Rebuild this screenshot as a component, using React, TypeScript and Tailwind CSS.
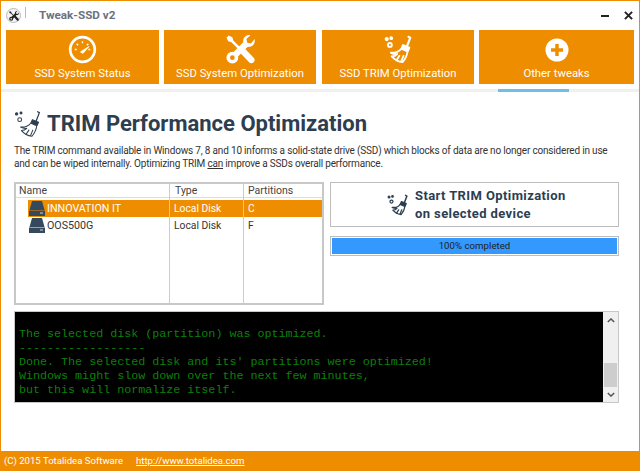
const Broom = ({ className = "", color = "#fff", w = 1.8 }: { className?: string; color?: string; w?: number }) => (
  <svg viewBox="0 0 32 32" className={className} fill="none" stroke={color} strokeWidth={w} strokeLinejoin="round" strokeLinecap="round">
    <path d="M27 2l2 1-4 10.500" strokeWidth={w * 1.2} />
    <path d="M21 11l7 3-1.500 3.500-7-3z" fill={color} />
    <path d="M19 15l7 3c-.5 4.500-2.500 8.500-5.500 12-3.500-.5-9-3-12-6.500 2.500 0 4.500-.8 6-2.500-2 .2-4.500 0-7-1.500 5 .5 10-1.500 11.500-4.500z" />
    <path d="M14 27.500l3-4.500M19 29l2.500-6" />
    <circle cx="6.500" cy="11" r="2.200" />
    <circle cx="3" cy="4.500" r="1.300" fill={color} />
    <circle cx="8" cy="3.500" r="1.100" fill={color} />
  </svg>
);

const Tools = ({ className = "", color = "#fff", hole = "#ee8d00" }: { className?: string; color?: string; hole?: string }) => (
  <svg viewBox="0 0 32 32" className={className} fill={color}>
    <path d="M0.500 3L3 .500 7 2.500 8 6 19.500 17.500 17.500 19.500 6 8 2.500 7z" />
    <path d="M19 16l1.500-1.500 10 10.500c1.500 1.500 1.500 3.500 0 5s-3.500 1.500-5 0L15.500 19.500z" />
    <path d="M31.500 4.500c1 4-1.500 8.500-6 8.500-1 0-1.700.2-2.400.9L12.500 24.500l-5-5L18.200 8.900c.7-.7.8-1.400.8-2.400 0-4 4-7.300 8-6.300l-4.500 4.300 1 4 4 1z" />
    <circle cx="7" cy="25" r="6.500" />
    <circle cx="7" cy="25" r="2.600" fill={hole} />
  </svg>
);

const Tab = ({ label, className, children }: { label: string; className: string; children: React.ReactNode }) => (
  <div className={`flex h-[54px] flex-col items-center bg-[#ee8d00] text-white ${className}`}>
    <div className="flex h-[34px] items-end justify-center">{children}</div>
    <div className="mt-[2px] text-[11.300px] leading-[16px]">{label}</div>
  </div>
);

const Row = ({ name, part, selected }: { name: string; part: string; selected?: boolean }) => (
  <div className={`flex h-[17px] items-center text-[10.300px] ${selected ? "text-white" : "text-[#333]"}`}>
    <div className={`ml-[12px] flex h-full w-[142px] items-center ${selected ? "bg-[#ee8d00]" : ""}`}>
      <svg viewBox="0 0 16 15" className="ml-[1px] mr-[2px] h-[15px] w-[16px] shrink-0">
        <path d="M3 0h10l2.500 9H.5z" fill="#34495e" />
        <rect x="0" y="9.500" width="16" height="5.500" fill="#34495e" />
        <rect x="11" y="11.500" width="3" height="1" fill="#cfd8dc" />
      </svg>
      <span className="pt-[1px] text-[10.700px]">{name}</span>
    </div>
    <div className={`flex h-full w-[74px] items-center pl-[4px] ${selected ? "bg-[#ee8d00]" : ""}`}>Local Disk</div>
    <div className={`flex h-full flex-1 items-center pl-[4px] ${selected ? "bg-[#ee8d00]" : ""}`}>{part}</div>
  </div>
);

export default function App() {
  return (
    <div className="flex h-[471px] w-[640px] flex-col overflow-hidden border-x border-t border-[#ee8d00] bg-white font-['Roboto',sans-serif] text-[#2c3e50]">
      <div className="flex h-[29px] shrink-0 items-center pl-[5px]">
        <div className="flex h-[15px] w-[15px] items-center justify-center rounded-full border border-[#bbb] bg-[#f4f4f4]">
          <Tools className="h-[10px] w-[10px]" color="#222" hole="#f4f4f4" />
        </div>
        <div className="ml-[4px] mb-[6px] h-[11px] w-px bg-[#bbb]" />
        <div className="ml-[13px] text-[11.700px] font-bold text-[#6b7280]">Tweak-SSD v2</div>
        <div className="ml-auto mr-[6px] flex items-center gap-[15px]">
          <div className="h-[2px] w-[8px] bg-[#222]" />
          <svg viewBox="0 0 10 10" className="h-[9px] w-[9px]" stroke="#222" strokeWidth="2.200"><path d="M1 1l8 8M9 1l-8 8" /></svg>
        </div>
      </div>

      <div className="flex shrink-0 pl-[5px]">
        <Tab label="SSD System Status" className="w-[153px]">
          <svg viewBox="0 0 30 30" className="h-[29px] w-[29px]" fill="none" stroke="#fff">
            <circle cx="15" cy="15" r="12.700" strokeWidth="2.800" />
            <path d="M7 15h2M9 9l1.500 1.500M15 6.500v2M21 9l-1.500 1.500M23 15h-2" strokeWidth="1.400" />
            <path d="M13 17.500L21.500 12 15.500 19z" fill="#fff" strokeWidth="1" />
          </svg>
        </Tab>
        <Tab label="SSD System Optimization" className="ml-[5px] w-[152px]">
          <Tools className="h-[29px] w-[29px]" />
        </Tab>
        <Tab label="SSD TRIM Optimization" className="ml-[6px] w-[152px]">
          <Broom className="h-[29px] w-[29px]" w={2} />
        </Tab>
        <Tab label="Other tweaks" className="ml-[5px] w-[155px]">
          <svg viewBox="0 0 24 24" className="mb-[2px] h-[24px] w-[24px]">
            <circle cx="12" cy="12" r="11.500" fill="#fff" />
            <path d="M6 12h12M12 6v12" stroke="#ee8d00" strokeWidth="3.500" />
          </svg>
        </Tab>
      </div>

      <div className="relative mt-[5px] h-[3px] shrink-0 bg-[#f0f0f0]">
        <div className="absolute left-[497px] top-0 h-[3px] w-[71px] bg-[#6fbfe4]" />
      </div>

      <div className="flex min-h-0 flex-1 flex-col pl-[13px] pr-[20px]">
        <div className="mt-[16px] flex h-[32px] items-center">
          <Broom className="h-[28px] w-[28px]" color="#2c3e50" w={1.200} />
          <h1 className="ml-[5px] text-[22px] font-bold leading-[32px] text-[#2c3e50]">TRIM Performance Optimization</h1>
        </div>
        <p className="mt-[4px] w-[606px] text-[10px] leading-[13px] tracking-[-0.18px] text-[#333]">
          The TRIM command available in Windows 7, 8 and 10 informs a solid-state drive (SSD) which blocks of data are no longer considered in use and can be wiped internally. Optimizing TRIM <u>can</u> improve a SSDs overall performance.
        </p>

        <div className="mt-[12px] flex items-start">
          <div className="relative flex h-[123px] w-[310px] shrink-0 flex-col border-2 border-[#c8c8c8]">
            <div className="flex h-[14px] border-b border-[#ddd] text-[10.500px] leading-[14px] text-[#444]">
              <div className="w-[153px] pl-[3px]">Name</div>
              <div className="w-[74px] border-l border-[#ccc] pl-[5px]">Type</div>
              <div className="flex-1 border-l border-[#ccc] pl-[4px]">Partitions</div>
            </div>
            <div className="mt-[2px]">
              <Row name="INNOVATION IT" part="C" selected />
              <Row name="OOS500G" part="F" />
            </div>
            <div className="absolute bottom-0 left-[153px] top-0 w-px bg-[#ccc]" />
            <div className="absolute bottom-0 left-[227px] top-0 w-px bg-[#ccc]" />
          </div>

          <div className="ml-[6px] flex w-[289px] flex-col">
            <div className="flex h-[45px] items-center border border-[#bdbdbd]">
              <Broom className="ml-[56px] h-[22px] w-[22px]" color="#2c3e50" w={1.800} />
              <div className="ml-[6px] text-[13px] font-bold leading-[18px] tracking-[0.4px] text-[#2c3e50]">
                Start TRIM Optimization
                <br />
                on selected device
              </div>
            </div>
            <div className="mt-[9px] h-[20px] border border-[#bdbdbd] p-[1px]">
              <div className="flex h-full items-center justify-center bg-[#3399ff] text-[9.700px] text-[#222]">100% completed</div>
            </div>
          </div>
        </div>

        <div className="mt-[6px] flex h-[92px] w-[605px] border border-[#c8c8c8]">
          <div className="min-w-0 flex-1 bg-black pl-[4px] pt-[15px] font-['Liberation_Mono',monospace] text-[11.700px] leading-[14px] text-[#0b800b]">
            <div>The selected disk (partition) was optimized.</div>
            <div>------------------</div>
            <div>Done. The selected disk and its' partitions were optimized!</div>
            <div>Windows might slow down over the next few minutes,</div>
            <div>but this will normalize itself.</div>
          </div>
          <div className="flex w-[15px] flex-col bg-[#f0f0f0]">
            <div className="flex h-[17px] items-center justify-center">
              <svg viewBox="0 0 10 6" className="h-[5px] w-[8px]" fill="none" stroke="#555" strokeWidth="1.800"><path d="M1 5l4-4 4 4" /></svg>
            </div>
            <div className="mx-[1px] mt-[34px] h-[24px] bg-[#cdcdcd]" />
            <div className="flex flex-1 items-center justify-center">
              <svg viewBox="0 0 10 6" className="h-[5px] w-[8px]" fill="none" stroke="#555" strokeWidth="1.800"><path d="M1 1l4 4 4-4" /></svg>
            </div>
          </div>
        </div>
      </div>

      <div className="-mx-px flex h-[20px] shrink-0 items-center bg-[#ee8d00] pl-[4px] text-[9.600px] text-white">
        <span>(C) 2015 Totalidea Software</span>
        <u className="ml-[13px]">http://www.totalidea.com</u>
      </div>
    </div>
  );
}
